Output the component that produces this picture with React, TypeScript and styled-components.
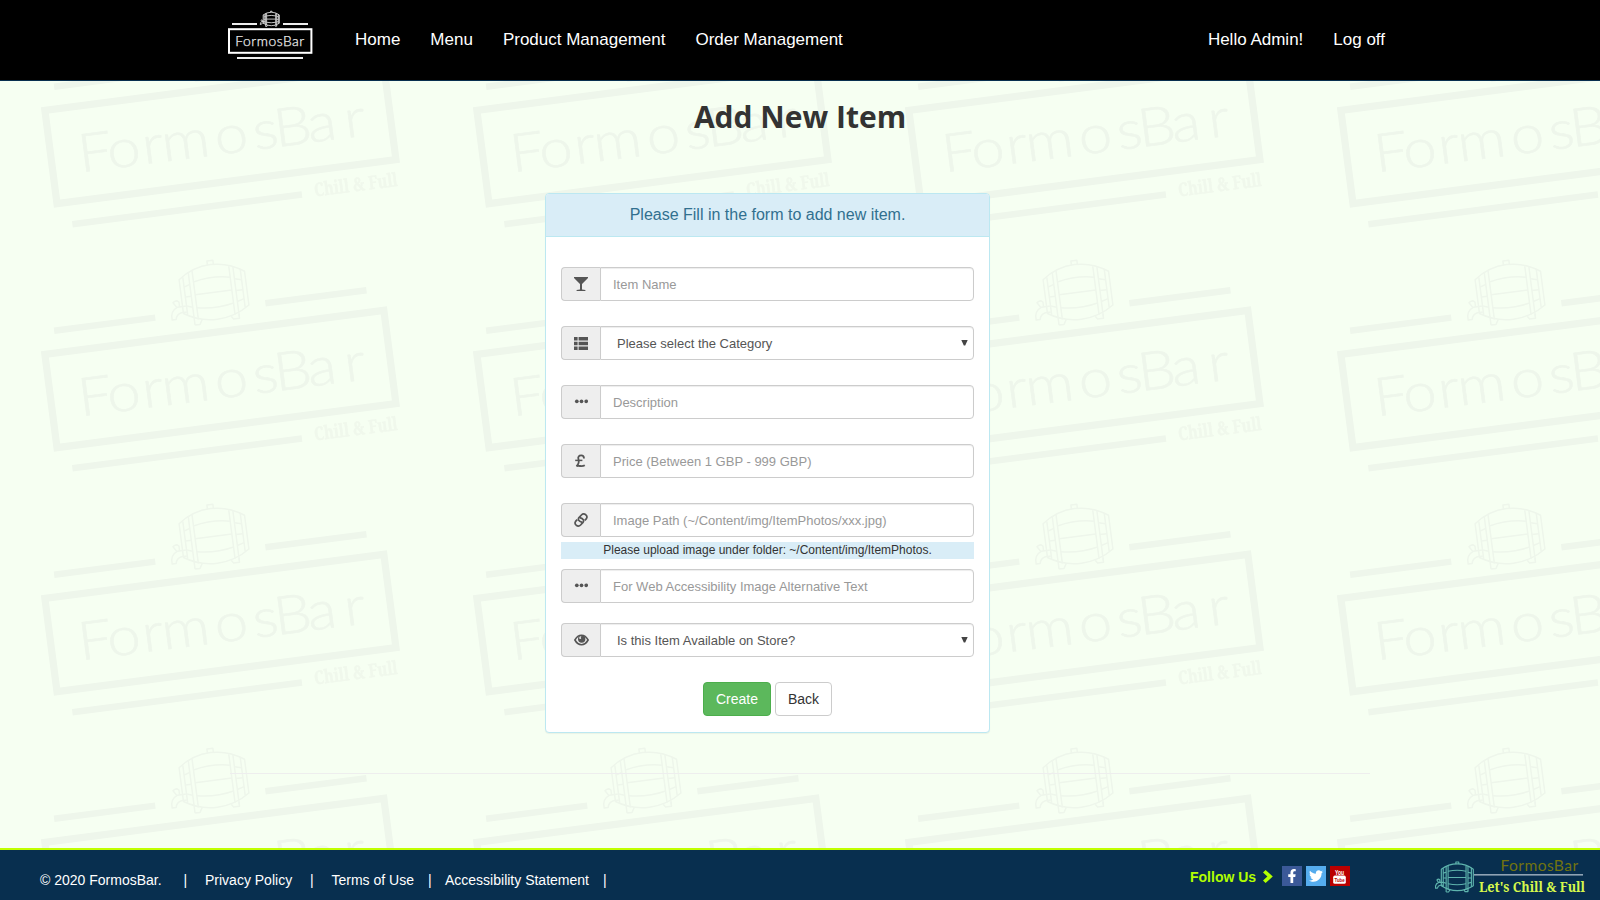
import React from "react";
import styled, { createGlobalStyle } from "styled-components";
import { FaFacebookF, FaTwitter } from "react-icons/fa";

const Global = createGlobalStyle`
  * { box-sizing: border-box; }
  html, body { margin: 0; padding: 0; }
  body {
    width: 1600px; height: 900px; overflow: hidden;
    background: #f6fff2; color: #333;
    font-family: "Liberation Sans", Arial, sans-serif; font-size: 14px;
  }
  a { text-decoration: none; color: inherit; }
`;

const Page = styled.div`
  position: relative;
  display: flex;
  flex-direction: column;
  height: 900px;
`;
const Backdrop = styled.svg`
  position: absolute;
  inset: 0;
  z-index: -1;
`;
const Header = styled.header`
  display: flex;
  height: 81px;
  flex: none;
  padding: 0 200px 0 228px;
  background: #000;
  border-bottom: 1px solid #082f4f;
`;
const HeaderLogo = styled.svg`
  display: block;
  margin-right: 27px;
  flex: none;
`;
const NavGroup = styled.nav<{ $end?: boolean }>`
  display: flex;
  margin-left: ${(p) => (p.$end ? "auto" : "0")};
`;
const NavLink = styled.a`
  padding: 30px 15px 0;
  font-size: 17px;
  line-height: 20px;
  color: #fff;
  white-space: nowrap;
`;
const Main = styled.main`
  flex: 1;
  display: flex;
  flex-direction: column;
`;
const Title = styled.h1`
  margin: 19px 0 60px;
  text-align: center;
  font: 700 30px/33px "Open Sans", sans-serif;
`;
const Panel = styled.section`
  width: 445px;
  margin-left: 545px;
  background: #fff;
  border: 1px solid #bce8f1;
  border-radius: 4px;
  box-shadow: 0 1px 1px rgba(0, 0, 0, 0.05);
`;
const PanelHeading = styled.div`
  height: 43px;
  background: #d9edf7;
  border-bottom: 1px solid #bce8f1;
  border-radius: 3px 3px 0 0;
  text-align: center;
  font-size: 16px;
  line-height: 41px;
  color: #31708f;
`;
const Form = styled.form`
  padding: 30px 15px 16px;
`;
const Field = styled.div<{ $gap: number }>`
  display: flex;
  height: 34px;
  margin-bottom: ${(p) => p.$gap}px;
`;
const Addon = styled.span`
  width: 39px;
  flex: none;
  display: flex;
  align-items: center;
  justify-content: center;
  border: 1px solid #ccc;
  border-right: 0;
  border-radius: 4px 0 0 4px;
  background: #eee;
  color: #555;
  svg { display: block; }
`;
const Input = styled.input`
  flex: 1;
  min-width: 0;
  padding: 0 12px;
  border: 1px solid #ccc;
  border-radius: 0 4px 4px 0;
  background: #fff;
  box-shadow: inset 0 1px 1px rgba(0, 0, 0, 0.075);
  font: 13px "Liberation Sans", Arial, sans-serif;
  color: #555;
  outline: none;
  &::placeholder { color: #999; opacity: 1; }
`;
const Select = styled.div`
  flex: 1;
  display: flex;
  align-items: center;
  justify-content: space-between;
  padding: 0 5.5px 0 16px;
  border: 1px solid #ccc;
  border-radius: 0 4px 4px 0;
  background: #fff;
  box-shadow: inset 0 1px 1px rgba(0, 0, 0, 0.075);
  font-size: 13px;
  color: #555;
`;
const Hint = styled.div`
  height: 17px;
  margin: -5px 0 10px;
  background: #d9edf7;
  text-align: center;
  font-size: 12px;
  line-height: 16px;
`;
const Actions = styled.div`
  display: flex;
  justify-content: center;
  gap: 4px;
`;
const Button = styled.button<{ $primary?: boolean }>`
  height: 34px;
  padding: 0 12px;
  border: 1px solid ${(p) => (p.$primary ? "#4cae4c" : "#ccc")};
  border-radius: 4px;
  background: ${(p) => (p.$primary ? "#5cb85c" : "#fff")};
  color: ${(p) => (p.$primary ? "#fff" : "#333")};
  font: 14px/20px "Liberation Sans", Arial, sans-serif;
`;
const Rule = styled.hr`
  width: 1140px;
  margin: 40px auto 0;
  border: 0;
  border-top: 1px solid #eee;
`;
const Footer = styled.footer`
  display: flex;
  flex: none;
  height: 52px;
  border-top: 2px solid #c0ff00;
  background: #082f4f;
  color: #fff;
`;
const FooterLinks = styled.div`
  display: flex;
  width: 1190px;
  padding: 22px 0 0 40px;
  line-height: 16px;
  white-space: pre;
`;
const FooterCell = styled.span<{ $w: number }>`
  width: ${(p) => p.$w}px;
`;
const Social = styled.div`
  display: flex;
  width: 245px;
  gap: 4px;
  padding-top: 16px;
`;
const Follow = styled.span`
  display: flex;
  width: 88px;
  gap: 7px;
  font-weight: 700;
  line-height: 22px;
  color: #b2ff00;
  svg { margin-top: 4px; }
`;
const Tile = styled.a<{ $bg: string }>`
  display: flex;
  align-items: center;
  justify-content: center;
  width: 20px;
  height: 20px;
  background: ${(p) => p.$bg};
  color: #fff;
`;

/* Beer keg with tap, drawn in an 80 x 64 box. */
const Barrel = ({ stroke }: { stroke: number }) => (
  <g fill="none" stroke="currentColor" strokeWidth={stroke} strokeLinejoin="round">
    <path d="M13 16Q28 5 46 5T79 16V50Q64 60 46 60T13 50Z" />
    <path d="M17 14V52M23 10V63M27 9V58M64 9V58M68 10V60M75 13V52" />
    <path d="M27 20Q46 16 64 20M27 33H64M27 46Q46 50 64 46" />
    <path d="M17 24L23 22M17 34H23M17 43L23 45M68 22L75 24M68 34H75M68 45L75 43" />
    <path d="M43 5V1H49V5M23 63H28L31 58M60 59L62 62H68V58" />
    <path d="M17 49H11Q6 50 5 55H1Q0 46 8 43H17M7 43L4 38Q7 35 10 38L10 43" />
  </g>
);

/* Left edge of each letter of the wordmark, before the 1.12 widening. */
const letterX = [31, 60, 95.5, 115, 168.5, 207, 228.5, 262, 299].map((x) => x / 1.12).join(" ");

const Watermark = () => (
  <Backdrop width="1600" height="900">
    <defs>
      <pattern id="mark" width="432" height="244" patternUnits="userSpaceOnUse">
        {[-244, 0].map((dy) => (
          <g key={dy} transform={`translate(40.7 ${351.7 + dy}) rotate(-7.4)`} fill="#eef6eb" color="#eef6eb">
            <rect x="3.8" y="3.2" width="341.8" height="94" fill="none" stroke="#eef6eb" strokeWidth="7.2" />
            <rect x="16" y="-22.3" width="102" height="6.5" />
            <rect x="229" y="-22.3" width="102" height="6.5" />
            <rect x="16.4" y="116.4" width="231.5" height="6.5" />
            <g transform="translate(133.5 -69.5)">
              <Barrel stroke={1.5} />
            </g>
            <text
              x={letterX}
              y="69.5"
              transform="scale(1.12 1)"
              fontFamily="Lato, sans-serif"
              fontWeight="300"
              fontSize="53.5"
              stroke="#eef6eb"
              strokeWidth="0.6"
            >
              FormosBar
            </text>
            <text
              x="260.5"
              y="123.5"
              textLength="84"
              lengthAdjust="spacingAndGlyphs"
              fontFamily="'Noto Serif', 'DejaVu Serif', serif"
              fontWeight="700"
              fontSize="18.5"
              fill="#f0f8ec"
              stroke="#f0f8ec"
              strokeWidth="0.5"
            >
              Chill &amp; Full
            </text>
          </g>
        ))}
      </pattern>
    </defs>
    <rect width="1600" height="900" fill="url(#mark)" />
  </Backdrop>
);

const icons = {
  glass: (
    <svg width="14" height="14" viewBox="0 0 14 14" fill="currentColor">
      <path d="M0 0H14V1L8 7V12.6L11.4 13V14H2.6V13L6 12.6V7L0 1Z" />
    </svg>
  ),
  list: (
    <svg width="14" height="13" viewBox="0 0 14 13" fill="currentColor">
      <path d="M0 0H3.6V3.6H0ZM4.6 0H14V3.6H4.6ZM0 4.8H3.6V8.2H0ZM4.6 4.8H14V8.2H4.6ZM0 9.4H3.6V13H0ZM4.6 9.4H14V13H4.6Z" />
    </svg>
  ),
  dots: (
    <svg width="14" height="6" viewBox="0 0 14 6" fill="currentColor">
      <circle cx="2.8" cy="2.3" r="1.85" />
      <circle cx="7.5" cy="2.3" r="1.85" />
      <circle cx="12.2" cy="2.3" r="1.85" />
    </svg>
  ),
  pound: (
    <svg width="14" height="14" viewBox="0 0 14 14" fill="none" stroke="currentColor" strokeWidth="1.8">
      <path d="M10 4.4C10 2.2 9 1.3 7.2 1.3C4.8 1.3 3.8 3 4.4 5C5.2 7.6 5.4 9.8 2.4 12.2C5.4 10.8 7.2 13.6 10.8 11.2" />
      <path d="M1.2 6.4H8.4" strokeWidth="1.5" />
    </svg>
  ),
  link: (
    <svg width="14" height="14" viewBox="0 0 14 14" fill="none" stroke="currentColor" strokeWidth="1.7">
      <path d="M8.2 9.4Q2.8 7.6 5 4.6L7.4 2Q9.4 0 11.8 1.8Q13.8 3.6 12.4 5.6L10.8 7.4" />
      <path d="M5.8 4.6Q11.2 6.4 9 9.4L6.6 12Q4.6 14 2.2 12.2Q.2 10.4 1.6 8.4L3.2 6.6" />
    </svg>
  ),
  eye: (
    <svg width="15" height="12" viewBox="0 0 15 12">
      <path d="M.9 6Q3.4 1.3 7.5 1.3T14.1 6Q11.6 10.7 7.5 10.7T.9 6Z" fill="none" stroke="currentColor" strokeWidth="1.6" />
      <circle cx="7.7" cy="5" r="3.7" fill="currentColor" />
      <path d="M5 4.4Q5.2 1.9 7.4 2.2Q6.2 3.2 7.2 5Z" fill="#eee" />
    </svg>
  ),
};

const Caret = () => (
  <svg width="7" height="6" viewBox="0 0 7 6">
    <path d="M.3 0H6.7L4.2 5.6H2.8Z" fill="#444" />
  </svg>
);

type RowProps = { icon: keyof typeof icons; text: string; gap?: number; select?: boolean };
const Row = ({ icon, text, gap = 25, select }: RowProps) => (
  <Field $gap={gap}>
    <Addon>{icons[icon]}</Addon>
    {select ? (
      <Select>
        {text}
        <Caret />
      </Select>
    ) : (
      <Input placeholder={text} />
    )}
  </Field>
);

export default function App() {
  return (
    <Page>
      <Global />
      <Watermark />
      <Header>
        <HeaderLogo width="85" height="80" viewBox="228 0 85 80" color="#ddd" fill="#eee">
          <rect x="229" y="29.2" width="82.4" height="23.6" fill="none" stroke="#fff" strokeWidth="2" />
          <path d="M232 23H257V25H232ZM283 23H308V25H283ZM237 57H303V59H237Z" />
          <g transform="translate(260 11) scale(.245)">
            <Barrel stroke={3.6} />
          </g>
          <text
            x="235.3"
            y="46"
            textLength="69.5"
            lengthAdjust="spacingAndGlyphs"
            fontFamily="Lato, sans-serif"
            fontWeight="300"
            fontSize="13.2"
            letterSpacing="0.5"
            stroke="#eee"
            strokeWidth="0.25"
          >
            FormosBar
          </text>
        </HeaderLogo>
        <NavGroup>
          <NavLink>Home</NavLink>
          <NavLink>Menu</NavLink>
          <NavLink>Product Management</NavLink>
          <NavLink>Order Management</NavLink>
        </NavGroup>
        <NavGroup $end>
          <NavLink>Hello Admin!</NavLink>
          <NavLink>Log off</NavLink>
        </NavGroup>
      </Header>
      <Main>
        <Title>Add New Item</Title>
        <Panel>
          <PanelHeading>Please Fill in the form to add new item.</PanelHeading>
          <Form>
            <Row icon="glass" text="Item Name" />
            <Row icon="list" text="Please select the Category" select />
            <Row icon="dots" text="Description" />
            <Row icon="pound" text="Price (Between 1 GBP - 999 GBP)" />
            <Row icon="link" text="Image Path (~/Content/img/ItemPhotos/xxx.jpg)" gap={10} />
            <Hint>Please upload image under folder: ~/Content/img/ItemPhotos.</Hint>
            <Row icon="dots" text="For Web Accessibility Image Alternative Text" gap={20} />
            <Row icon="eye" text="Is this Item Available on Store?" select />
            <Actions>
              <Button type="button" $primary>
                Create
              </Button>
              <Button type="button">Back</Button>
            </Actions>
          </Form>
        </Panel>
        <Rule />
      </Main>
      <Footer>
        <FooterLinks>
          <FooterCell $w={143.5}>© 2020 FormosBar.</FooterCell>
          <FooterCell $w={21.5}>|</FooterCell>
          <FooterCell $w={105}>Privacy Policy</FooterCell>
          <FooterCell $w={21.5}>|</FooterCell>
          <FooterCell $w={96.5}>Terms of Use</FooterCell>
          <FooterCell $w={17}>|</FooterCell>
          <FooterCell $w={158}>Accessibility Statement</FooterCell>
          <FooterCell $w={4}>|</FooterCell>
        </FooterLinks>
        <Social>
          <Follow>
            Follow Us
            <svg width="10" height="13" viewBox="0 0 10 13" fill="currentColor">
              <path d="M0 2.4L2.6 0L9.8 6.5L2.6 13L0 10.6L4.4 6.5Z" />
            </svg>
          </Follow>
          <Tile $bg="#3b5998">
            <FaFacebookF size={14} />
          </Tile>
          <Tile $bg="#55acee">
            <FaTwitter size={14} />
          </Tile>
          <Tile $bg="#bb0000">
            <svg width="20" height="20" viewBox="0 0 20 20" fill="#fff">
              <rect x="3.2" y="9.6" width="12.6" height="8.2" rx="1.6" />
              <text x="5" y="8.8" textLength="9" lengthAdjust="spacingAndGlyphs" fontWeight="700" fontSize="6.5">
                You
              </text>
              <text x="4.6" y="16.2" textLength="10" lengthAdjust="spacingAndGlyphs" fontWeight="700" fontSize="6" fill="#bb0000">
                Tube
              </text>
            </svg>
          </Tile>
        </Social>
        <svg width="165" height="50" viewBox="1435 850 165 50">
          <g transform="translate(1435 861.5) scale(.485)" color="#5fb5ae">
            <Barrel stroke={2.3} />
          </g>
          <rect x="1474" y="874" width="109" height="1.6" fill="#8fa3b4" />
          <text
            x="1500.5"
            y="871"
            textLength="78"
            lengthAdjust="spacingAndGlyphs"
            fontFamily="Lato, sans-serif"
            fontSize="15"
            letterSpacing="0.4"
            fill="#71730f"
          >
            FormosBar
          </text>
          <text
            x="1479"
            y="892"
            textLength="106"
            lengthAdjust="spacingAndGlyphs"
            fontFamily="'Noto Serif', 'DejaVu Serif', serif"
            fontWeight="700"
            fontSize="14.6"
            fill="#d6f84c"
          >
            Let's Chill &amp; Full
          </text>
        </svg>
      </Footer>
    </Page>
  );
}
